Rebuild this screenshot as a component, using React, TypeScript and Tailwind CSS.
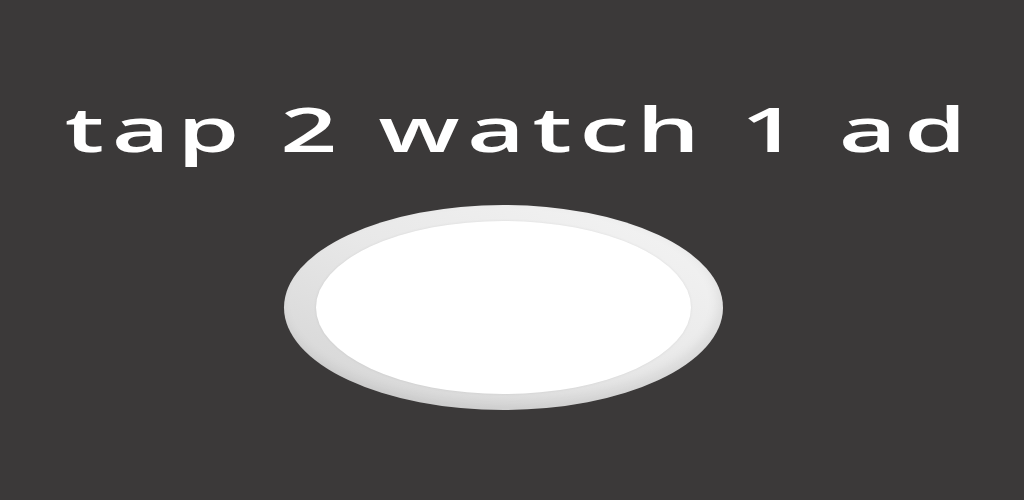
export default function App() {
  return (
    <div className="flex h-[500px] w-full flex-col items-center bg-[#3b3939]">
      <h1
        className="mt-[88px] ml-[14px] origin-center scale-x-[1.61] whitespace-nowrap text-[62px] font-semibold leading-[80px] tracking-[0.075em] text-white"
        style={{ fontFamily: '"Open Sans", "Noto Sans", sans-serif' }}
      >
        tap 2 watch 1 ad
      </h1>
      <button className="mt-[37px] -ml-[17px] flex h-[205px] w-[439px] items-center justify-center rounded-[50%] bg-gradient-to-bl from-[#f5f5f5] via-[#e8e8e8] to-[#d2d2d2] shadow-[inset_-4px_-6px_12px_rgba(0,0,0,0.08)]">
        <span className="h-[173px] w-[375px] rounded-[50%] bg-white shadow-[0_0_3px_rgba(0,0,0,0.08)]" />
      </button>
    </div>
  );
}
